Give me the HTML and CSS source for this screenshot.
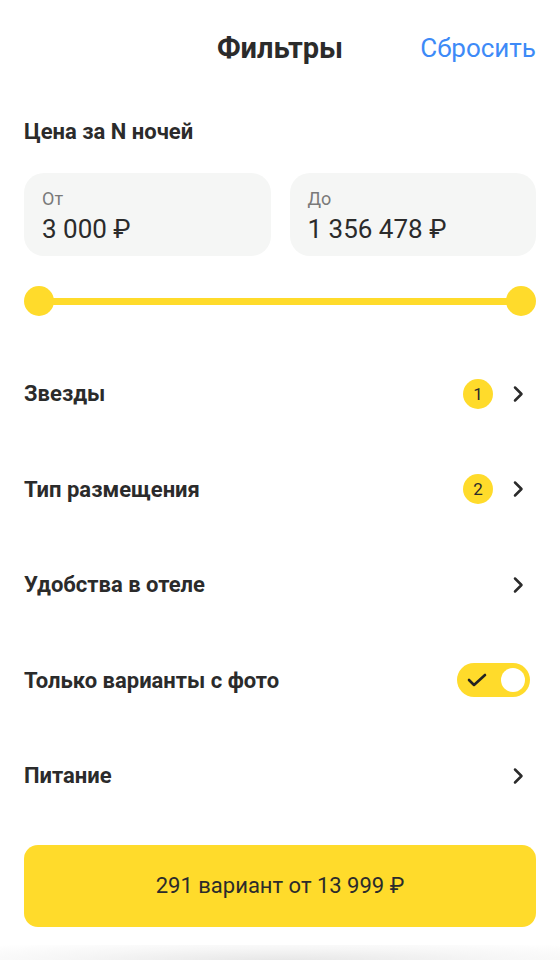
FILE: index.html
```html
<!DOCTYPE html>
<html lang="ru">
<head>
  <meta charset="UTF-8">
  <meta name="viewport" content="width=device-width, initial-scale=1.0">
  <title>Фильтры</title>
  <link rel="stylesheet" href="styles.css">
</head>
<body>
  <header class="top-bar">
    <span></span>
    <h1>Фильтры</h1>
    <a href="#" class="reset">Сбросить</a>
  </header>

  <main>
    <section class="price">
      <h2>Цена за N ночей</h2>

      <div class="price-fields">
        <div class="price-field">
          <span class="field-label">От</span>
          <span class="field-value">3 000 ₽</span>
        </div>
        <div class="price-field">
          <span class="field-label">До</span>
          <span class="field-value">1 356 478 ₽</span>
        </div>
      </div>

      <div class="range">
        <span class="range-thumb"></span>
        <span class="range-track"></span>
        <span class="range-thumb"></span>
      </div>
    </section>

    <ul class="filter-list">
      <li class="filter-row">
        <span class="filter-name">Звезды</span>
        <span class="badge">1</span>
        <svg class="chevron" width="24" height="24" viewBox="0 0 24 24"><path d="M9 5.5l6.5 6.5-6.5 6.5"/></svg>
      </li>
      <li class="filter-row">
        <span class="filter-name">Тип размещения</span>
        <span class="badge">2</span>
        <svg class="chevron" width="24" height="24" viewBox="0 0 24 24"><path d="M9 5.5l6.5 6.5-6.5 6.5"/></svg>
      </li>
      <li class="filter-row">
        <span class="filter-name">Удобства в отеле</span>
        <svg class="chevron" width="24" height="24" viewBox="0 0 24 24"><path d="M9 5.5l6.5 6.5-6.5 6.5"/></svg>
      </li>
      <li class="filter-row">
        <span class="filter-name">Только варианты с фото</span>
        <span class="toggle">
          <svg class="toggle-check" width="20" height="14" viewBox="0 0 20 14"><path d="M2 7l5 5L18 2"/></svg>
          <span class="toggle-knob"></span>
        </span>
      </li>
      <li class="filter-row">
        <span class="filter-name">Питание</span>
        <svg class="chevron" width="24" height="24" viewBox="0 0 24 24"><path d="M9 5.5l6.5 6.5-6.5 6.5"/></svg>
      </li>
    </ul>

    <button class="show-btn">291 вариант от 13 999 ₽</button>
  </main>

  <div class="bottom-fade"></div>
</body>
</html>
```

FILE: styles.css
```css
body {
  font-family: Roboto, "Noto Sans", Arial, sans-serif;
  margin: 0;
  padding: 0;
  background-color: white;
  color: #2b2b2b;
  height: 960px;
  overflow: hidden;
}

.top-bar {
  display: grid;
  grid-template-columns: 1fr auto 1fr;
  align-items: center;
  height: 96px;
  padding: 0 24px;
}

.top-bar h1 {
  margin: 0;
  font-size: 29px;
  font-weight: 700;
  line-height: 32px;
}

.reset {
  justify-self: end;
  color: #3d8af7;
  font-size: 26px;
  text-decoration: none;
}

main {
  padding: 0 24px;
}

.price h2 {
  margin: 22px 0 27px;
  font-size: 22px;
  font-weight: 700;
  line-height: 28px;
}

.price-fields {
  display: grid;
  grid-template-columns: 1fr 1fr;
  gap: 19px;
}

.price-field {
  display: flex;
  flex-direction: column;
  gap: 5px;
  padding: 16px 18px 12px;
  background-color: #f5f6f5;
  border-radius: 20px;
}

.field-label {
  font-size: 18px;
  line-height: 20px;
  color: #7a7a7a;
}

.field-value {
  font-size: 26px;
  line-height: 30px;
  color: #2b2b2b;
}

.range {
  display: flex;
  align-items: center;
  margin-top: 30px;
  height: 30px;
}

.range-thumb {
  width: 30px;
  height: 30px;
  border-radius: 50%;
  background-color: #ffdb2b;
  flex-shrink: 0;
}

.range-track {
  flex: 1;
  height: 7px;
  margin: 0 -2px;
  background-color: #ffdb2b;
}

.filter-list {
  list-style: none;
  margin: 30px 0 0;
  padding: 0;
}

.filter-row {
  display: flex;
  align-items: center;
  height: 95.5px;
}

.filter-name {
  flex: 1;
  font-size: 22px;
  font-weight: 700;
}

.badge {
  display: flex;
  align-items: center;
  justify-content: center;
  width: 30px;
  height: 30px;
  border-radius: 50%;
  background-color: #ffdb2b;
  font-size: 17px;
  margin-right: 13px;
}

.chevron {
  margin-right: 6px;
  fill: none;
  stroke: #2b2b2b;
  stroke-width: 2.5;
  stroke-linecap: round;
  stroke-linejoin: round;
}

.toggle {
  display: flex;
  align-items: center;
  justify-content: space-between;
  width: 73px;
  height: 34px;
  box-sizing: border-box;
  padding: 0 5px 0 10px;
  margin-right: 6px;
  border-radius: 17px;
  background-color: #ffdb2b;
}

.toggle-check {
  fill: none;
  stroke: #222;
  stroke-width: 2.6;
  stroke-linecap: round;
  stroke-linejoin: round;
}

.toggle-knob {
  width: 24px;
  height: 24px;
  border-radius: 50%;
  background-color: white;
}

.show-btn {
  display: block;
  width: 100%;
  height: 82px;
  margin-top: 21px;
  border: none;
  border-radius: 14px;
  background-color: #ffdb2b;
  font-family: inherit;
  font-size: 22px;
  color: #2b2b2b;
  cursor: pointer;
}

.bottom-fade {
  height: 16px;
  margin-top: 18px;
  background: radial-gradient(ellipse at 50% 100%, #e6e6e6 0%, #f6f6f6 55%, white 100%);
}
```
